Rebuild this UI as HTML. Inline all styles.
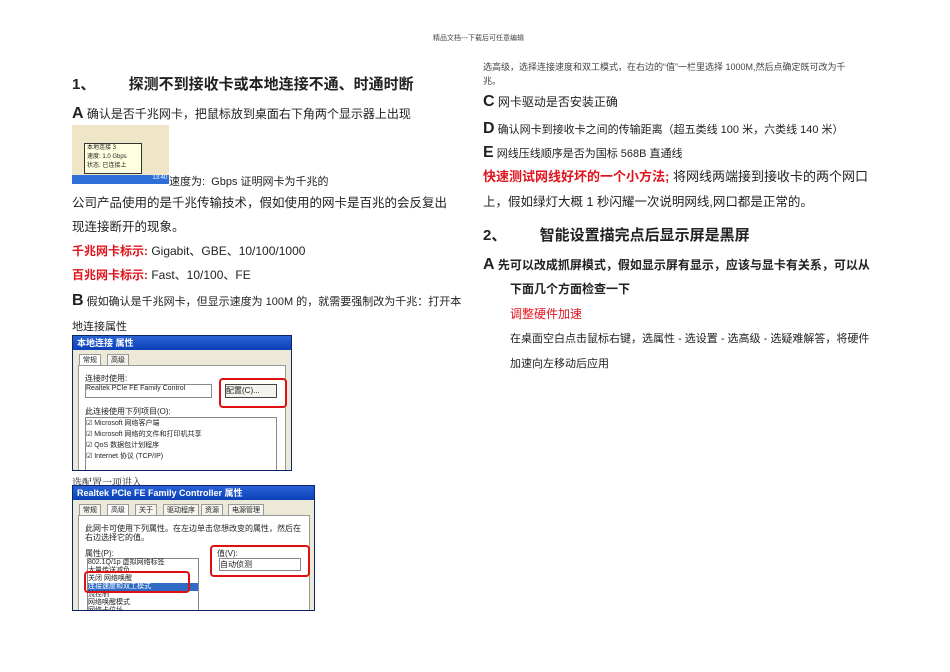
<html><head><style>
body{margin:0;width:950px;height:672px;background:#fff;font-family:"Liberation Sans","Noto Sans CJK SC",sans-serif;color:#222;position:relative;overflow:hidden}
.t{position:absolute;white-space:nowrap;font-size:12px}
.b{font-weight:bold}
.r{color:#e0141e;font-weight:bold}
.big{font-size:16px;font-weight:bold}
.win{position:absolute;background:#ece9d8;border:1px solid #0a246a;overflow:hidden;font-size:8px}
.tb{background:linear-gradient(#2a63d6,#0a3fb8);color:#fff;font-weight:bold;height:14px;line-height:14px;padding-left:4px;font-size:9px}
.rb{position:absolute;border:2px solid #e01010;border-radius:4px}
.tab{position:absolute;top:18px;height:10px;border:1px solid #999;border-bottom:none;background:#f4f3ee;font-size:7px;padding:0 3px}
</style></head><body>
<div class="t" style="left:433px;top:33px;font-size:7px;color:#444">精品文档---下载后可任意编辑</div>
<div class="t big" style="left:72px;top:73px;font-size:15px">1、&nbsp;&nbsp;&nbsp;&nbsp;&nbsp;&nbsp;&nbsp;&nbsp;探测不到接收卡或本地连接不通、时通时断</div>
<div class="t" style="left:72px;top:105px"><b style="font-size:16px">A</b> 确认是否千兆网卡，把鼠标放到桌面右下角两个显示器上出现</div>
<div style="position:absolute;left:72px;top:125px;width:97px;height:59px;background:#efe6c8">
 <div style="position:absolute;left:12px;top:18px;width:54px;height:29px;background:#ffffe1;border:1px solid #333;font-size:6px;line-height:9px;padding-left:2px">本地连接 3<br>速度: 1.0 Gbps<br>状态: 已连接上</div>
 <div style="position:absolute;left:0;top:50px;width:97px;height:9px;background:#2f6fd8;color:#fff;font-size:6px;text-align:right">13:40&nbsp;</div>
</div>
<div class="t" style="left:169px;top:173px;font-size:11px">速度为:&nbsp; Gbps 证明网卡为千兆的</div>
<div class="t" style="left:72px;top:192px;font-size:12.5px">公司产品使用的是千兆传输技术，假如使用的网卡是百兆的会反复出</div>
<div class="t" style="left:72px;top:216px;font-size:12.5px">现连接断开的现象。</div>
<div class="t" style="left:72px;top:242px"><span class="r">千兆网卡标示:</span> Gigabit、GBE、10/100/1000</div>
<div class="t" style="left:72px;top:266px"><span class="r">百兆网卡标示:</span> Fast、10/100、FE</div>
<div class="t" style="left:72px;top:292px;font-size:11px"><b style="font-size:16px">B</b> 假如确认是千兆网卡，但显示速度为 100M 的，就需要强制改为千兆：打开本</div>
<div class="t" style="left:72px;top:318px;font-size:11px">地连接属性</div>
<div class="win" style="left:72px;top:335px;width:218px;height:134px">
 <div class="tb">本地连接 属性</div>
 <div class="tab" style="left:6px;background:#fff">常规</div><div class="tab" style="left:34px">高级</div>
 <div style="position:absolute;left:5px;top:29px;width:206px;height:104px;background:#fff;border:1px solid #999"></div>
 <div style="position:absolute;left:12px;top:37px">连接时使用:</div>
 <div style="position:absolute;left:12px;top:48px;width:125px;height:12px;background:#fff;border:1px solid #888;font-size:7px">Realtek PCIe FE Family Control</div>
 <div style="position:absolute;left:152px;top:48px;width:50px;height:12px;border:1px solid #444;background:#f4f3ee">配置(C)...</div>
 <div style="position:absolute;left:12px;top:70px">此连接使用下列项目(O):</div>
 <div style="position:absolute;left:12px;top:81px;width:190px;height:52px;background:#fff;border:1px solid #888;line-height:11px;font-size:7px">☑ Microsoft 网络客户端<br>☑ Microsoft 网络的文件和打印机共享<br>☑ QoS 数据包计划程序<br>☑ Internet 协议 (TCP/IP)</div>
</div>
<div class="rb" style="left:219px;top:378px;width:64px;height:26px"></div>
<div class="t" style="left:72px;top:474px;font-size:10px;font-family:'Liberation Serif','Noto Serif CJK SC',serif">选配置一项进入</div>
<div class="win" style="left:72px;top:485px;width:241px;height:124px">
 <div class="tb">Realtek PCIe FE Family Controller 属性</div>
 <div class="tab" style="left:6px">常规</div><div class="tab" style="left:34px;background:#fff">高级</div><div class="tab" style="left:62px">关于</div><div class="tab" style="left:90px">驱动程序</div><div class="tab" style="left:128px">资源</div><div class="tab" style="left:155px">电源管理</div>
 <div style="position:absolute;left:5px;top:29px;width:230px;height:100px;background:#fff;border:1px solid #999"></div>
 <div style="position:absolute;left:12px;top:38px;line-height:9px">此网卡可使用下列属性。在左边单击您想改变的属性，然后在<br>右边选择它的值。</div>
 <div style="position:absolute;left:12px;top:62px">属性(P):</div>
 <div style="position:absolute;left:14px;top:72px;width:110px;height:60px;background:#fff;border:1px solid #888;line-height:8px;font-size:7px">802.1Q/1p 虚拟网络标签<br>大量传送减负<br>关闭 网络唤醒<br><span style="background:#316ac5;color:#fff;display:block">连接速度和双工模式</span>流控制<br>网络唤醒模式<br>网络卡位址</div>
 <div style="position:absolute;left:144px;top:62px">值(V):</div>
 <div style="position:absolute;left:146px;top:72px;width:80px;height:11px;background:#fff;border:1px solid #888">自动侦测</div>
</div>
<div class="rb" style="left:210px;top:545px;width:96px;height:28px"></div>
<div class="rb" style="left:84px;top:571px;width:102px;height:18px"></div>

<div class="t" style="left:483px;top:60px;font-size:9px;color:#444;line-height:14px">选高级，选择连接速度和双工模式，在右边的“值”一栏里选择 1000M,然后点确定既可改为千<br>兆。</div>
<div class="t" style="left:483px;top:93px"><b style="font-size:16px">C</b> 网卡驱动是否安装正确</div>
<div class="t" style="left:483px;top:120px;font-size:11px"><b style="font-size:16px">D</b> 确认网卡到接收卡之间的传输距离（超五类线 100 米，六类线 140 米）</div>
<div class="t" style="left:483px;top:144px;font-size:11px"><b style="font-size:16px">E</b> 网线压线顺序是否为国标 568B 直通线</div>
<div class="t" style="left:483px;top:166px;font-size:13px"><span class="r">快速测试网线好坏的一个小方法;</span> 将网线两端接到接收卡的两个网口</div>
<div class="t" style="left:483px;top:191px;font-size:12.5px">上，假如绿灯大概 1 秒闪耀一次说明网线,网口都是正常的。</div>
<div class="t big" style="left:483px;top:224px;font-size:15px">2、&nbsp;&nbsp;&nbsp;&nbsp;&nbsp;&nbsp;&nbsp;&nbsp;智能设置描完点后显示屏是黑屏</div>
<div class="t b" style="left:483px;top:256px"><span style="font-size:16px">A</span> 先可以改成抓屏模式，假如显示屏有显示，应该与显卡有关系，可以从</div>
<div class="t b" style="left:510px;top:280px">下面几个方面检查一下</div>
<div class="t" style="left:510px;top:305px;color:#e0141e">调整硬件加速</div>
<div class="t" style="left:510px;top:330px;font-size:11px">在桌面空白点击鼠标右键，选属性 - 选设置 - 选高级 - 选疑难解答，将硬件</div>
<div class="t" style="left:510px;top:355px;font-size:11px">加速向左移动后应用</div>
</body></html>
